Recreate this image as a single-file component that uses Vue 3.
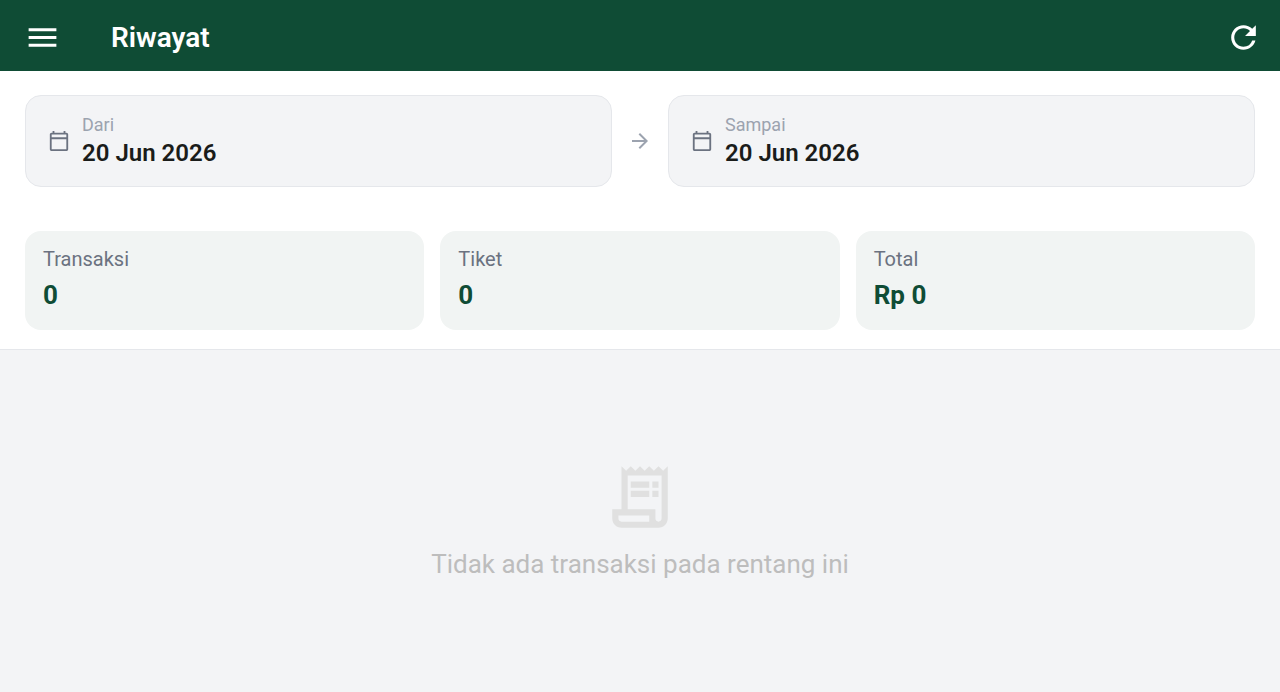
<script setup>
const dates = [
  { id: 'from', label: 'Dari', value: '20 Jun 2026' },
  { id: 'to', label: 'Sampai', value: '20 Jun 2026' },
]
const stats = [
  { label: 'Transaksi', value: '0' },
  { label: 'Tiket', value: '0' },
  { label: 'Total', value: 'Rp 0' },
]
</script>

<template>
  <div class="page">
    <header class="bar">
      <button class="icon-button" type="button" aria-label="Menu">
        <svg viewBox="0 0 24 24"><path d="M3 18h18v-2H3v2zm0-5h18v-2H3v2zm0-7v2h18V6H3z" /></svg>
      </button>
      <h1 class="title">Riwayat</h1>
      <button class="icon-button" type="button" aria-label="Refresh">
        <svg viewBox="0 0 24 24"><path d="M17.65 6.35A7.958 7.958 0 0 0 12 4c-4.42 0-7.99 3.58-7.99 8s3.57 8 7.99 8c3.73 0 6.84-2.55 7.73-6h-2.08A5.99 5.99 0 0 1 12 18c-3.31 0-6-2.69-6-6s2.69-6 6-6c1.66 0 3.14.69 4.22 1.78L13 11h7V4l-2.35 2.35z" /></svg>
      </button>
    </header>

    <section class="summary">
      <div class="range">
        <template v-for="(date, i) in dates" :key="date.id">
          <svg v-if="i > 0" class="arrow" viewBox="0 0 24 24"><path d="M12 4l-1.41 1.41L16.17 11H4v2h12.17l-5.58 5.59L12 20l8-8z" /></svg>
          <button class="date" type="button">
            <svg class="calendar" viewBox="0 0 24 24"><path d="M20 3h-1V1h-2v2H7V1H5v2H4c-1.1 0-2 .9-2 2v16c0 1.1.9 2 2 2h16c1.1 0 2-.9 2-2V5c0-1.1-.9-2-2-2zm0 18H4V10h16v11zm0-13H4V5h16v3z" /></svg>
            <span class="date-text">
              <span class="date-label">{{ date.label }}</span>
              <span class="date-value">{{ date.value }}</span>
            </span>
          </button>
        </template>
      </div>

      <dl class="stats">
        <div v-for="stat in stats" :key="stat.label" class="stat">
          <dt>{{ stat.label }}</dt>
          <dd>{{ stat.value }}</dd>
        </div>
      </dl>
    </section>

    <main class="empty">
      <svg class="receipt" viewBox="0 0 24 24">
        <path d="M19.5 3.5L18 2l-1.5 1.5L15 2l-1.5 1.5L12 2l-1.5 1.5L9 2 7.5 3.5 6 2v14H3v3c0 1.66 1.34 3 3 3h12c1.66 0 3-1.34 3-3V2l-1.5 1.5zM15 20H6c-.55 0-1-.45-1-1v-1h10v2zm4-1c0 .55-.45 1-1 1s-1-.45-1-1v-3H8V5h11v14z" />
        <path d="M9 7h6v2H9zM16 7h2v2h-2zM9 10h6v2H9zM16 10h2v2h-2z" />
      </svg>
      <p>Tidak ada transaksi pada rentang ini</p>
    </main>
  </div>
</template>

<style>
body {
  margin: 0;
  background: #f3f4f6;
}
</style>

<style scoped>
.page {
  display: flex;
  flex-direction: column;
  min-height: 100vh;
  background: #f3f4f6;
  font-family: Roboto, "Liberation Sans", sans-serif;
}
svg {
  display: block;
  flex: none;
  fill: currentColor;
}
button {
  font: inherit;
  cursor: pointer;
}
.bar {
  display: flex;
  align-items: center;
  padding: 18px 18px 14px 24px;
  background: #0f4c35;
  color: #fff;
}
.icon-button {
  padding: 0;
  border: 0;
  background: none;
  color: inherit;
}
.icon-button svg {
  width: 37px;
  height: 37px;
}
.title {
  flex: 1;
  margin: 0 0 0 50px;
  font-size: 28px;
  line-height: 39px;
  font-weight: 600;
}
.summary {
  display: flex;
  flex-direction: column;
  gap: 44px;
  padding: 24px 25px 19px;
  border-bottom: 1px solid #e5e7eb;
  background: #fff;
}
.range {
  display: flex;
  align-items: center;
  gap: 16px;
}
.arrow {
  width: 24px;
  height: 24px;
  color: #9ca3af;
}
.date {
  display: flex;
  flex: 1;
  align-items: center;
  gap: 12px;
  padding: 16px 22px;
  border: 1px solid #e5e7eb;
  border-radius: 16px;
  background: #f3f4f6;
  text-align: left;
}
.calendar {
  width: 22px;
  height: 22px;
  color: #6b7280;
}
.date-text {
  display: flex;
  flex-direction: column;
}
.date-label {
  color: #9ca3af;
  font-size: 18px;
  line-height: 25px;
}
.date-value {
  color: #1a1c1a;
  font-size: 24px;
  line-height: 33px;
  font-weight: 600;
}
.stats {
  display: grid;
  grid-template-columns: repeat(3, 1fr);
  gap: 16px;
  margin: 0;
}
.stat {
  display: flex;
  flex-direction: column;
  gap: 3px;
  padding: 14px 18px 16px;
  border-radius: 16px;
  background: #f1f4f3;
}
.stat dt {
  color: #6b7280;
  font-size: 20px;
  line-height: 28px;
}
.stat dd {
  margin: 0;
  color: #0f4c35;
  font-size: 26px;
  line-height: 38px;
  font-weight: 700;
}
.empty {
  display: flex;
  flex: 1;
  flex-direction: column;
  align-items: center;
  justify-content: center;
  gap: 12px;
}
.receipt {
  width: 74px;
  height: 74px;
  color: #e0e0e0;
}
.empty p {
  margin: 0;
  color: #bdbdbd;
  font-size: 26px;
  line-height: 36px;
}
</style>
